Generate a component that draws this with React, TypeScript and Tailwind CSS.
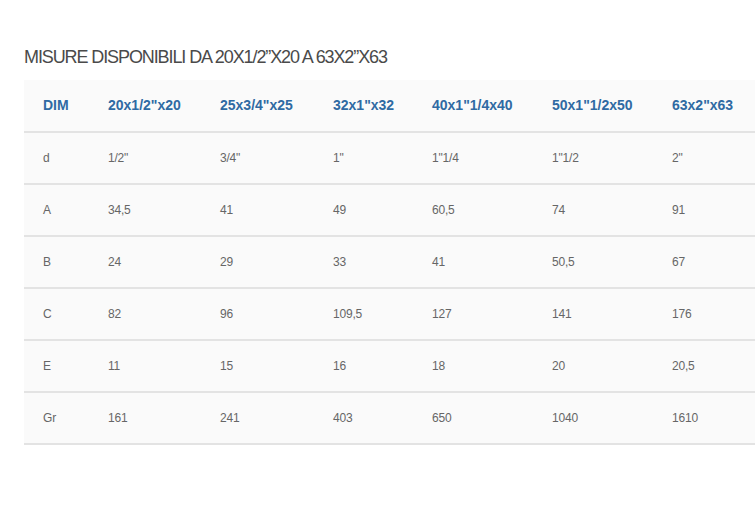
const headers = ["DIM", '20x1/2"x20', '25x3/4"x25', '32x1"x32', '40x1"1/4x40', '50x1"1/2x50', '63x2"x63'];

const rows = [
  ["d", '1/2"', '3/4"', '1"', '1"1/4', '1"1/2', '2"'],
  ["A", "34,5", "41", "49", "60,5", "74", "91"],
  ["B", "24", "29", "33", "41", "50,5", "67"],
  ["C", "82", "96", "109,5", "127", "141", "176"],
  ["E", "11", "15", "16", "18", "20", "20,5"],
  ["Gr", "161", "241", "403", "650", "1040", "1610"],
];

const cols = "grid grid-cols-[65px_112px_113px_99px_120px_120px_1fr]";

export default function App() {
  return (
    <div className="h-[512px] w-[755px] overflow-hidden bg-white font-['Liberation_Sans',Arial,sans-serif]">
      <h2 className="ml-6 pt-[45px] text-[18px] leading-[24px] tracking-[-1.1px] text-[#4a4a4a]">
        MISURE DISPONIBILI DA 20X1/2”X20 A 63X2”X63
      </h2>
      <div className="ml-6 mt-[11px] bg-[#fafafa]">
        <div className={`${cols} h-[53px] items-center border-b-2 border-[#e3e3e3]`}>
          {headers.map((h) => (
            <div key={h} className="pl-[19px] text-[14px] font-bold text-[#2f6aa3]">
              {h}
            </div>
          ))}
        </div>
        {rows.map((r) => (
          <div key={r[0]} className={`${cols} h-[52px] items-center border-b-2 border-[#e3e3e3]`}>
            {r.map((c, i) => (
              <div key={i} className="pl-[19px] text-[12px] tracking-[-0.2px] text-[#666]">
                {c}
              </div>
            ))}
          </div>
        ))}
      </div>
    </div>
  );
}
